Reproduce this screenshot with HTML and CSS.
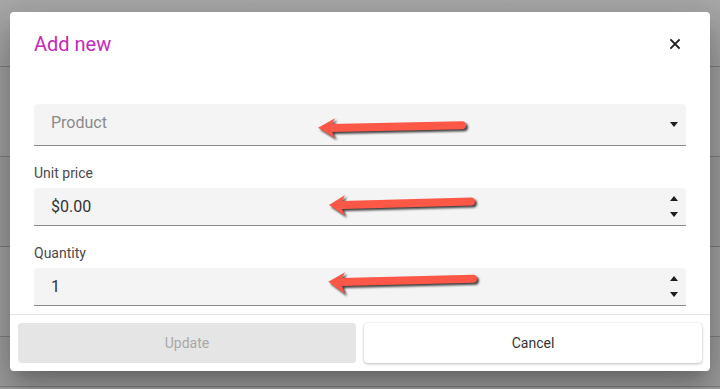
FILE: index.html
```html
<!DOCTYPE html>
<html>
<head>
<meta charset="utf-8">
<link rel="stylesheet" href="styles.css">
</head>
<body>
<div class="backdrop">
  <div class="row row-top"></div>
  <div class="row"></div>
  <div class="row"></div>
  <div class="row"></div>
  <div class="row row-last"></div>
</div>

<div class="dialog">
  <div class="dialog-header">
    <h2 class="dialog-title">Add new</h2>
    <button class="close-btn" aria-label="Close">
      <svg width="10" height="10" viewBox="0 0 10 10"><path d="M1 1L9 9M9 1L1 9" stroke="#222" stroke-width="1.8" stroke-linecap="square"/></svg>
    </button>
  </div>
  <div class="dialog-content">
    <div class="field field-select">
      <span class="placeholder">Product</span>
      <svg class="tri" width="8" height="5" viewBox="0 0 8 5"><path d="M0 0H8L4 5Z" fill="#1e1e1e"/></svg>
    </div>
    <label class="label">Unit price</label>
    <div class="field field-number">
      <span class="value">$0.00</span>
      <span class="spinner">
        <svg width="8" height="5" viewBox="0 0 8 5"><path d="M0 5H8L4 0Z" fill="#1e1e1e"/></svg>
        <svg width="8" height="5" viewBox="0 0 8 5"><path d="M0 0H8L4 5Z" fill="#1e1e1e"/></svg>
      </span>
    </div>
    <label class="label">Quantity</label>
    <div class="field field-number">
      <span class="value">1</span>
      <span class="spinner">
        <svg width="8" height="5" viewBox="0 0 8 5"><path d="M0 5H8L4 0Z" fill="#1e1e1e"/></svg>
        <svg width="8" height="5" viewBox="0 0 8 5"><path d="M0 0H8L4 5Z" fill="#1e1e1e"/></svg>
      </span>
    </div>
  </div>
  <div class="dialog-actions">
    <button class="btn btn-disabled">Update</button>
    <button class="btn btn-cancel">Cancel</button>
  </div>
</div>

<svg class="arrows" width="720" height="389" viewBox="0 0 720 389">
  <g class="arrow">
    <line x1="331" y1="128" x2="462" y2="125.3" stroke="#fd5747" stroke-width="8" stroke-linecap="round"/>
    <polygon points="318,127.7 335,118.3 332,124 332,132 335,138.3" fill="#fd5747"/>
  </g>
  <g class="arrow">
    <line x1="342" y1="205" x2="471" y2="201.5" stroke="#fd5747" stroke-width="8" stroke-linecap="round"/>
    <polygon points="329,205 345,195 342,201 342,209 345,215.7" fill="#fd5747"/>
  </g>
  <g class="arrow">
    <line x1="342" y1="282" x2="473" y2="278.8" stroke="#fd5747" stroke-width="8" stroke-linecap="round"/>
    <polygon points="328.3,281.7 345,272.3 342,278 342,286 345,294.3" fill="#fd5747"/>
  </g>
</svg>
</body>
</html>
```

FILE: styles.css
```css
* { box-sizing: border-box; }

html, body {
  margin: 0;
  padding: 0;
  width: 720px;
  height: 389px;
  overflow: hidden;
  background: #a2a2a2;
  font-family: Roboto, "Noto Sans", "Liberation Sans", sans-serif;
}

.backdrop {
  display: flex;
  flex-direction: column;
}

.row {
  height: 90px;
  border-bottom: 1px solid #7e7e7e;
  background: #a0a0a0;
}
.row-top {
  height: 67px;
  background: linear-gradient(#a9a9a9 0, #a6a6a6 22px, #a1a1a1 67px);
}
.row:nth-child(odd) { background-color: #9d9d9d; }
.row-top { background-color: transparent; }
.row-last { height: 50px; }

.dialog {
  position: absolute;
  left: 10px;
  top: 12px;
  width: 700px;
  height: 359px;
  background: #fff;
  border-radius: 4px;
  display: flex;
  flex-direction: column;
  box-shadow: 0 11px 15px -7px rgba(0,0,0,.2), 0 24px 38px 3px rgba(0,0,0,.14), 0 9px 46px 8px rgba(0,0,0,.12);
}

.dialog-header {
  height: 64px;
  display: flex;
  align-items: center;
  justify-content: space-between;
  padding: 0 23px 0 24px;
}

.dialog-title {
  margin: 0;
  font-size: 20px;
  font-weight: 400;
  color: #c42ab6;
  line-height: 24px;
}

.close-btn {
  width: 24px;
  height: 24px;
  border: 0;
  background: none;
  padding: 0;
  display: flex;
  align-items: center;
  justify-content: center;
}

.dialog-content {
  padding: 28px 24px 8px;
  display: flex;
  flex-direction: column;
  border-bottom: 1px solid #e4e4e4;
}

.field {
  background: #f4f4f4;
  border-bottom: 1px solid #8c8c8c;
  border-radius: 4px 4px 0 0;
  display: flex;
  align-items: center;
  justify-content: space-between;
  padding: 0 8px 0 17px;
  font-size: 16px;
}

.field-select {
  height: 42px;
  padding-bottom: 4px;
}

.field-number {
  height: 38px;
}

.placeholder { color: #8a8a8a; }
.value { color: #333; }

.tri { display: block; margin-top: 4px; }

.spinner {
  display: flex;
  flex-direction: column;
  gap: 11.6px;
}
.spinner svg { display: block; }

.label {
  display: block;
  margin: 17px 0 5px;
  height: 20px;
  line-height: 20px;
  font-size: 14px;
  color: #4a4a4a;
}

.dialog-actions {
  flex: 1;
  display: flex;
  gap: 8px;
  padding: 8px;
}

.btn {
  flex: 1;
  height: 40px;
  border: 0;
  border-radius: 4px;
  font-family: Roboto, "Noto Sans", "Liberation Sans", sans-serif;
  font-size: 14px;
}

.btn-disabled {
  background: #e5e5e5;
  color: #a9a9a9;
}

.btn-cancel {
  background: #fff;
  color: #333;
  box-shadow: 0 1px 3px rgba(0,0,0,.25), 0 0 1px rgba(0,0,0,.12);
}

.arrows {
  position: absolute;
  left: 0;
  top: 0;
  pointer-events: none;
}

.arrow {
  filter: drop-shadow(2px 2px 1.2px rgba(0,0,0,.75));
}
```
